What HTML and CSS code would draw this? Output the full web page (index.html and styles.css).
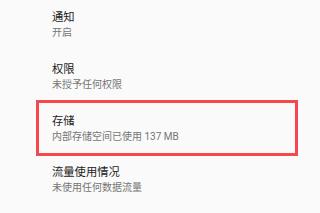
FILE: index.html
```html
<!DOCTYPE html>
<html lang="zh-CN">
<head>
<meta charset="utf-8">
<link rel="stylesheet" href="styles.css">
</head>
<body>
<div class="list">
  <div class="item first">
    <div class="title">通知</div>
    <div class="sub">开启</div>
  </div>
  <div class="item second">
    <div class="title">权限</div>
    <div class="sub">未授予任何权限</div>
  </div>
  <div class="item highlight">
    <div class="title">存储</div>
    <div class="sub">内部存储空间已使用 137 MB</div>
  </div>
  <div class="item last">
    <div class="title">流量使用情况</div>
    <div class="sub">未使用任何数据流量</div>
  </div>
</div>
</body>
</html>
```
FILE: styles.css
```css
html, body {
  margin: 0;
  padding: 0;
  background: #fafafa;
}
body {
  width: 320px;
  height: 213px;
  overflow: hidden;
  font-family: "Roboto", "Noto Sans CJK SC", sans-serif;
}
.list {
  display: flex;
  flex-direction: column;
}
.item {
  padding-left: 52px;
  display: flex;
  flex-direction: column;
  gap: 2px;
}
.title {
  font-size: 11.3px;
  line-height: 14px;
  color: #212121;
}
.sub {
  font-size: 10px;
  line-height: 12px;
  color: #757575;
}
.first {
  padding-top: 11px;
  padding-bottom: 13px;
}
.second {
  padding-top: 11px;
  padding-bottom: 9px;
}
.highlight {
  margin-left: 36px;
  width: 243px;
  padding-left: 13px;
  padding-top: 12px;
  padding-bottom: 10px;
  border: 3px solid #f5474c;
}
.last {
  padding-top: 10px;
}
```
